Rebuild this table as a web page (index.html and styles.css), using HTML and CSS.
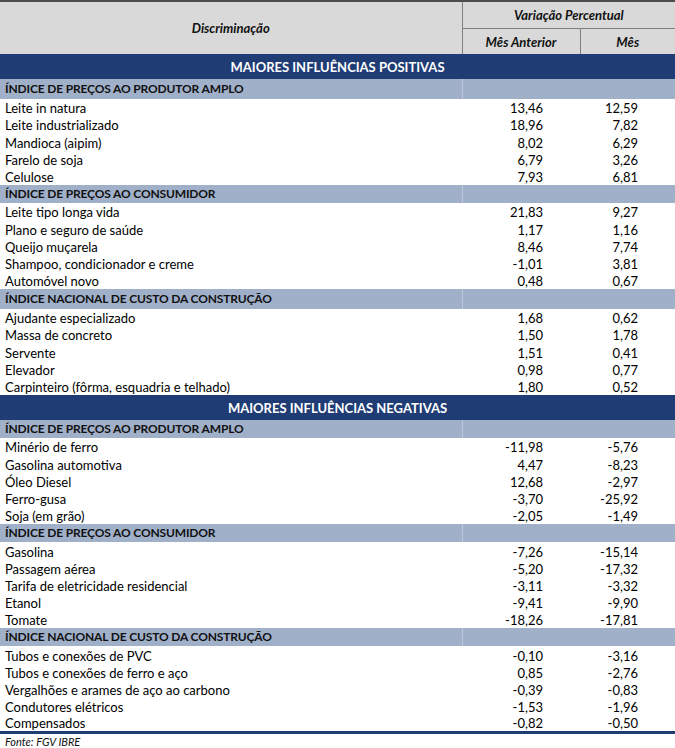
FILE: index.html
```html
<!DOCTYPE html>
<html lang="pt-BR">
<head>
<meta charset="utf-8">
<title>Maiores influências</title>
<link rel="stylesheet" href="styles.css">
</head>
<body>
<table class="tbl">
  <colgroup><col class="c1"><col class="c2"><col class="c3"></colgroup>
  <thead>
    <tr class="h1">
      <th rowspan="2" class="hd-left">Discriminação</th>
      <th colspan="2" class="hd-var">Variação Percentual</th>
    </tr>
    <tr class="h2">
      <th class="hd-sub hd-mid">Mês Anterior</th>
      <th class="hd-sub">Mês</th>
    </tr>
  </thead>
  <tbody>
    <tr class="band band-first"><td colspan="3">MAIORES INFLUÊNCIAS POSITIVAS</td></tr>
    <tr class="sec sec-tall"><td>ÍNDICE DE PREÇOS AO PRODUTOR AMPLO</td><td class="sec-mid"></td><td></td></tr>
    <tr class="row"><td>Leite in natura</td><td class="n">13,46</td><td class="n">12,59</td></tr>
    <tr class="row"><td>Leite industrializado</td><td class="n">18,96</td><td class="n">7,82</td></tr>
    <tr class="row"><td>Mandioca (aipim)</td><td class="n">8,02</td><td class="n">6,29</td></tr>
    <tr class="row"><td>Farelo de soja</td><td class="n">6,79</td><td class="n">3,26</td></tr>
    <tr class="row"><td>Celulose</td><td class="n">7,93</td><td class="n">6,81</td></tr>
    <tr class="sec"><td>ÍNDICE DE PREÇOS AO CONSUMIDOR</td><td class="sec-mid"></td><td></td></tr>
    <tr class="row"><td>Leite tipo longa vida</td><td class="n">21,83</td><td class="n">9,27</td></tr>
    <tr class="row"><td>Plano e seguro de saúde</td><td class="n">1,17</td><td class="n">1,16</td></tr>
    <tr class="row"><td>Queijo muçarela</td><td class="n">8,46</td><td class="n">7,74</td></tr>
    <tr class="row"><td>Shampoo, condicionador e creme</td><td class="n">-1,01</td><td class="n">3,81</td></tr>
    <tr class="row"><td>Automóvel novo</td><td class="n">0,48</td><td class="n">0,67</td></tr>
    <tr class="sec sec-tall"><td>ÍNDICE NACIONAL DE CUSTO DA CONSTRUÇÃO</td><td class="sec-mid"></td><td></td></tr>
    <tr class="row"><td>Ajudante especializado</td><td class="n">1,68</td><td class="n">0,62</td></tr>
    <tr class="row"><td>Massa de concreto</td><td class="n">1,50</td><td class="n">1,78</td></tr>
    <tr class="row"><td>Servente</td><td class="n">1,51</td><td class="n">0,41</td></tr>
    <tr class="row"><td>Elevador</td><td class="n">0,98</td><td class="n">0,77</td></tr>
    <tr class="row"><td>Carpinteiro (fôrma, esquadria e telhado)</td><td class="n">1,80</td><td class="n">0,52</td></tr>
    <tr class="band"><td colspan="3">MAIORES INFLUÊNCIAS NEGATIVAS</td></tr>
    <tr class="sec"><td>ÍNDICE DE PREÇOS AO PRODUTOR AMPLO</td><td class="sec-mid"></td><td></td></tr>
    <tr class="row"><td>Minério de ferro</td><td class="n">-11,98</td><td class="n">-5,76</td></tr>
    <tr class="row"><td>Gasolina automotiva</td><td class="n">4,47</td><td class="n">-8,23</td></tr>
    <tr class="row"><td>Óleo Diesel</td><td class="n">12,68</td><td class="n">-2,97</td></tr>
    <tr class="row"><td>Ferro-gusa</td><td class="n">-3,70</td><td class="n">-25,92</td></tr>
    <tr class="row"><td>Soja (em grão)</td><td class="n">-2,05</td><td class="n">-1,49</td></tr>
    <tr class="sec"><td>ÍNDICE DE PREÇOS AO CONSUMIDOR</td><td class="sec-mid"></td><td></td></tr>
    <tr class="row"><td>Gasolina</td><td class="n">-7,26</td><td class="n">-15,14</td></tr>
    <tr class="row"><td>Passagem aérea</td><td class="n">-5,20</td><td class="n">-17,32</td></tr>
    <tr class="row"><td>Tarifa de eletricidade residencial</td><td class="n">-3,11</td><td class="n">-3,32</td></tr>
    <tr class="row"><td>Etanol</td><td class="n">-9,41</td><td class="n">-9,90</td></tr>
    <tr class="row"><td>Tomate</td><td class="n">-18,26</td><td class="n">-17,81</td></tr>
    <tr class="sec"><td>ÍNDICE NACIONAL DE CUSTO DA CONSTRUÇÃO</td><td class="sec-mid"></td><td></td></tr>
    <tr class="row"><td>Tubos e conexões de PVC</td><td class="n">-0,10</td><td class="n">-3,16</td></tr>
    <tr class="row"><td>Tubos e conexões de ferro e aço</td><td class="n">0,85</td><td class="n">-2,76</td></tr>
    <tr class="row"><td>Vergalhões e arames de aço ao carbono</td><td class="n">-0,39</td><td class="n">-0,83</td></tr>
    <tr class="row"><td>Condutores elétricos</td><td class="n">-1,53</td><td class="n">-1,96</td></tr>
    <tr class="row row-last"><td>Compensados</td><td class="n">-0,82</td><td class="n">-0,50</td></tr>
  </tbody>
</table>
<p class="source">Fonte: FGV IBRE</p>
</body>
</html>
```

FILE: styles.css
```css
html, body {
  margin: 0;
  padding: 0;
  background: #ffffff;
}
body {
  font-family: Lato, "Open Sans", sans-serif;
  color: #000;
  width: 675px;
}
.tbl {
  width: 675px;
  border-collapse: collapse;
  table-layout: fixed;
  font-size: 13px;
  border-top: 2px solid #4d4d4d;
}
.c1 { width: 462px; }
.c2 { width: 118px; }
.c3 { width: 95px; }
.tbl td, .tbl th {
  padding: 0;
  white-space: nowrap;
  overflow: hidden;
}
thead th {
  background: #d9d9d9;
  font-style: italic;
  font-weight: bold;
  color: #111;
  font-size: 13px;
  text-align: center;
}
.h1 th { height: 26px; }
.h2 th { height: 25px; }
.hd-left { border-right: 1px solid #7f7f7f; }
.hd-var { border-bottom: 1px solid #7f7f7f; }
.hd-mid { border-right: 1px solid #7f7f7f; }

.band td {
  background: #1f3d74;
  color: #fff;
  font-weight: bold;
  text-align: center;
  height: 25px;
  font-size: 13px;
}
.sec td {
  background: #a0b0c9;
  font-weight: bold;
  color: #111;
  height: 18.2px;
  padding-left: 5px;
  font-size: 12px;
  letter-spacing: -0.15px;
  line-height: 14px;
  vertical-align: bottom;
  padding-bottom: 2px;
  box-sizing: border-box;
}
.sec.sec-tall td { height: 20px; padding-bottom: 3px; }
.sec td.sec-mid { border-left: 1px solid #bcc7d8; }
.row td {
  height: 17.2px;
  padding-left: 5px;
  line-height: 13px;
  vertical-align: bottom;
  padding-bottom: 1px;
  box-sizing: border-box;
}
.row td.n {
  text-align: right;
  padding-right: 37px;
  padding-left: 0;
}
.row-last td {
  border-bottom: 3px solid #1f3d74;
}
.source {
  margin: 0;
  padding: 1px 0 0 5px;
  font-size: 11px;
  line-height: 13px;
  font-style: italic;
  color: #111;
}
```
